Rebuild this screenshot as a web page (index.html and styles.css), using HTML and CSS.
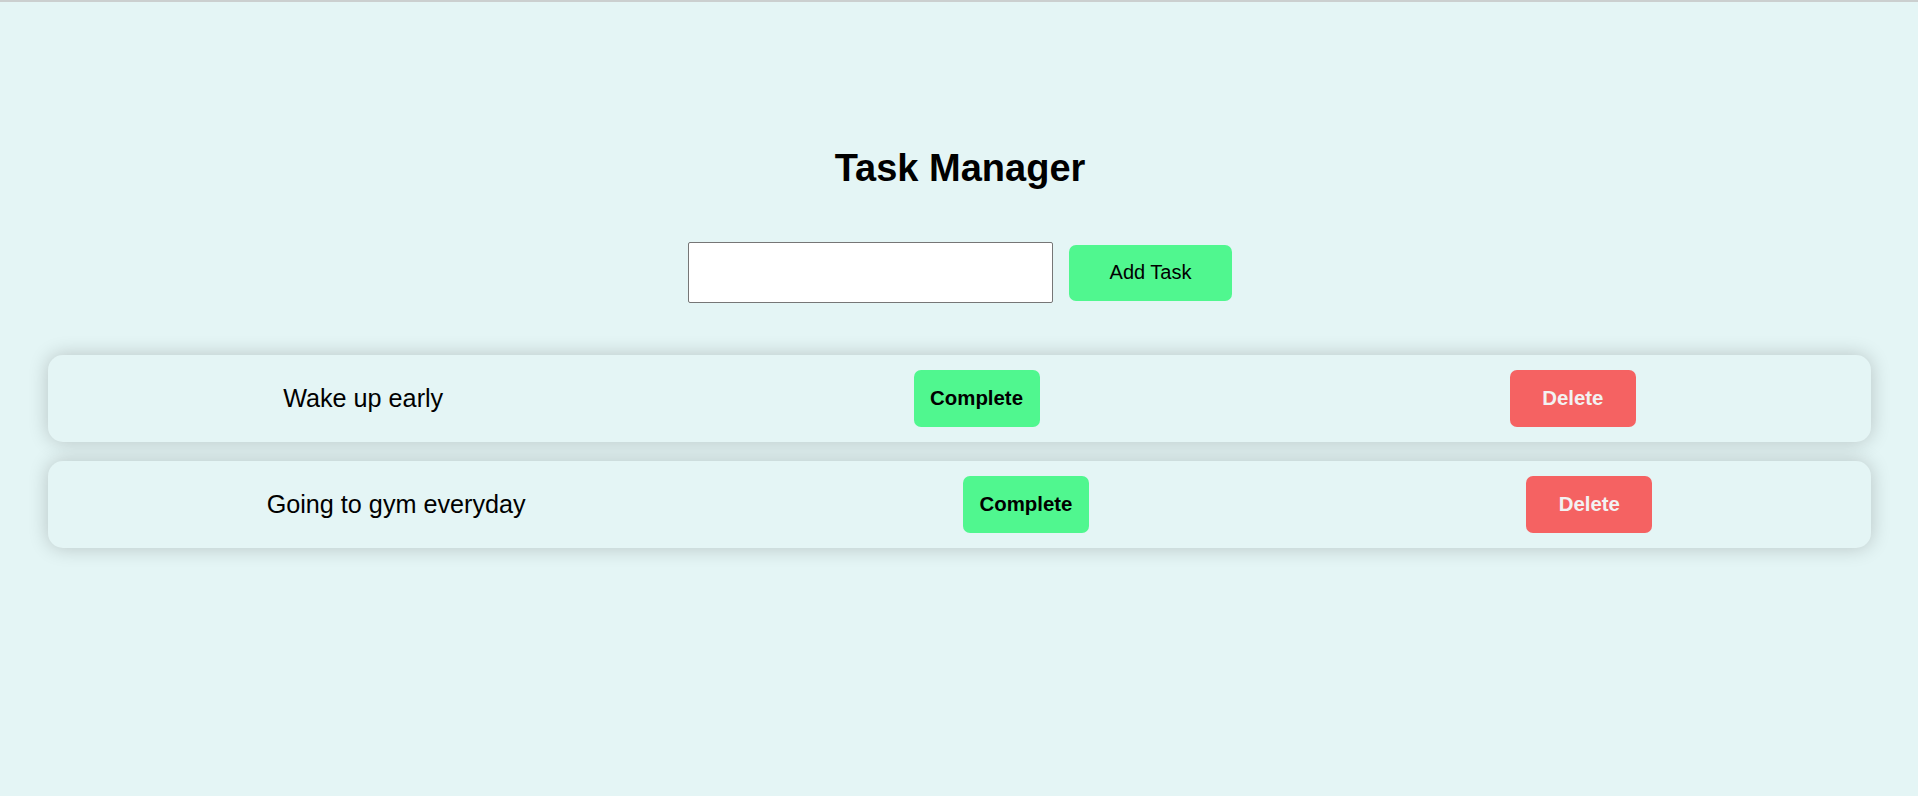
FILE: index.html
```html
<!DOCTYPE html>
<html lang="en">
<head>
<meta charset="utf-8">
<title>Task Manager</title>
<link rel="stylesheet" href="styles.css">
</head>
<body>
<main class="app">
  <h1 class="title">Task Manager</h1>
  <div class="add-row">
    <input class="task-input" type="text">
    <button class="btn btn-add">Add Task</button>
  </div>
  <ul class="task-list">
    <li class="task-card">
      <span class="task-text">Wake up early</span>
      <button class="btn btn-small btn-complete">Complete</button>
      <button class="btn btn-small btn-delete">Delete</button>
    </li>
    <li class="task-card">
      <span class="task-text">Going to gym everyday</span>
      <button class="btn btn-small btn-complete">Complete</button>
      <button class="btn btn-small btn-delete">Delete</button>
    </li>
  </ul>
</main>
</body>
</html>
```

FILE: styles.css
```css
html, body {
  margin: 0;
  padding: 0;
}

body {
  background: #e4f5f5;
  border-top: 2px solid #cbcfcf;
  font-family: "Liberation Sans", Arial, sans-serif;
  color: #000;
  min-height: 794px;
}

.app {
  display: flex;
  flex-direction: column;
  padding-left: 2px;
}

.title {
  margin: 145px 0 0;
  font-size: 38px;
  line-height: 43px;
  font-weight: 700;
  text-align: center;
}

.add-row {
  margin-top: 52px;
  display: flex;
  justify-content: center;
  align-items: center;
  gap: 16px;
}

.task-input {
  box-sizing: border-box;
  width: 365px;
  height: 61px;
  margin: 0;
  border: 1px solid #767676;
  border-radius: 2px;
  background: #fff;
  font-family: "Liberation Sans", Arial, sans-serif;
  font-size: 20px;
  padding: 0 8px;
}

.btn {
  box-sizing: border-box;
  margin: 0;
  border: none;
  border-radius: 7px;
  font-family: "Liberation Sans", Arial, sans-serif;
  font-size: 20px;
  line-height: 23px;
  cursor: pointer;
  padding: 0;
  text-align: center;
}

.btn-add {
  width: 163px;
  height: 56px;
  background: #50f78f;
  color: #000;
  font-weight: 400;
}

.task-list {
  list-style: none;
  margin: 52px 0 0;
  padding: 0 47px 0 46px;
  display: flex;
  flex-direction: column;
  gap: 19px;
}

.task-card {
  display: flex;
  justify-content: space-around;
  align-items: center;
  padding: 15px 0;
  border-radius: 15px;
  background: #e4f5f5;
  box-shadow: 0 0 20px rgba(0, 0, 0, 0.2);
}

.task-text {
  font-size: 25.2px;
  line-height: 29px;
  color: #000;
}

.btn-small {
  width: 126px;
  height: 57px;
  font-weight: 700;
  font-size: 20.4px;
}

.btn-complete {
  background: #50f78f;
  color: #000;
}

.btn-delete {
  background: #f56262;
  color: #f2f2f2;
}
```
